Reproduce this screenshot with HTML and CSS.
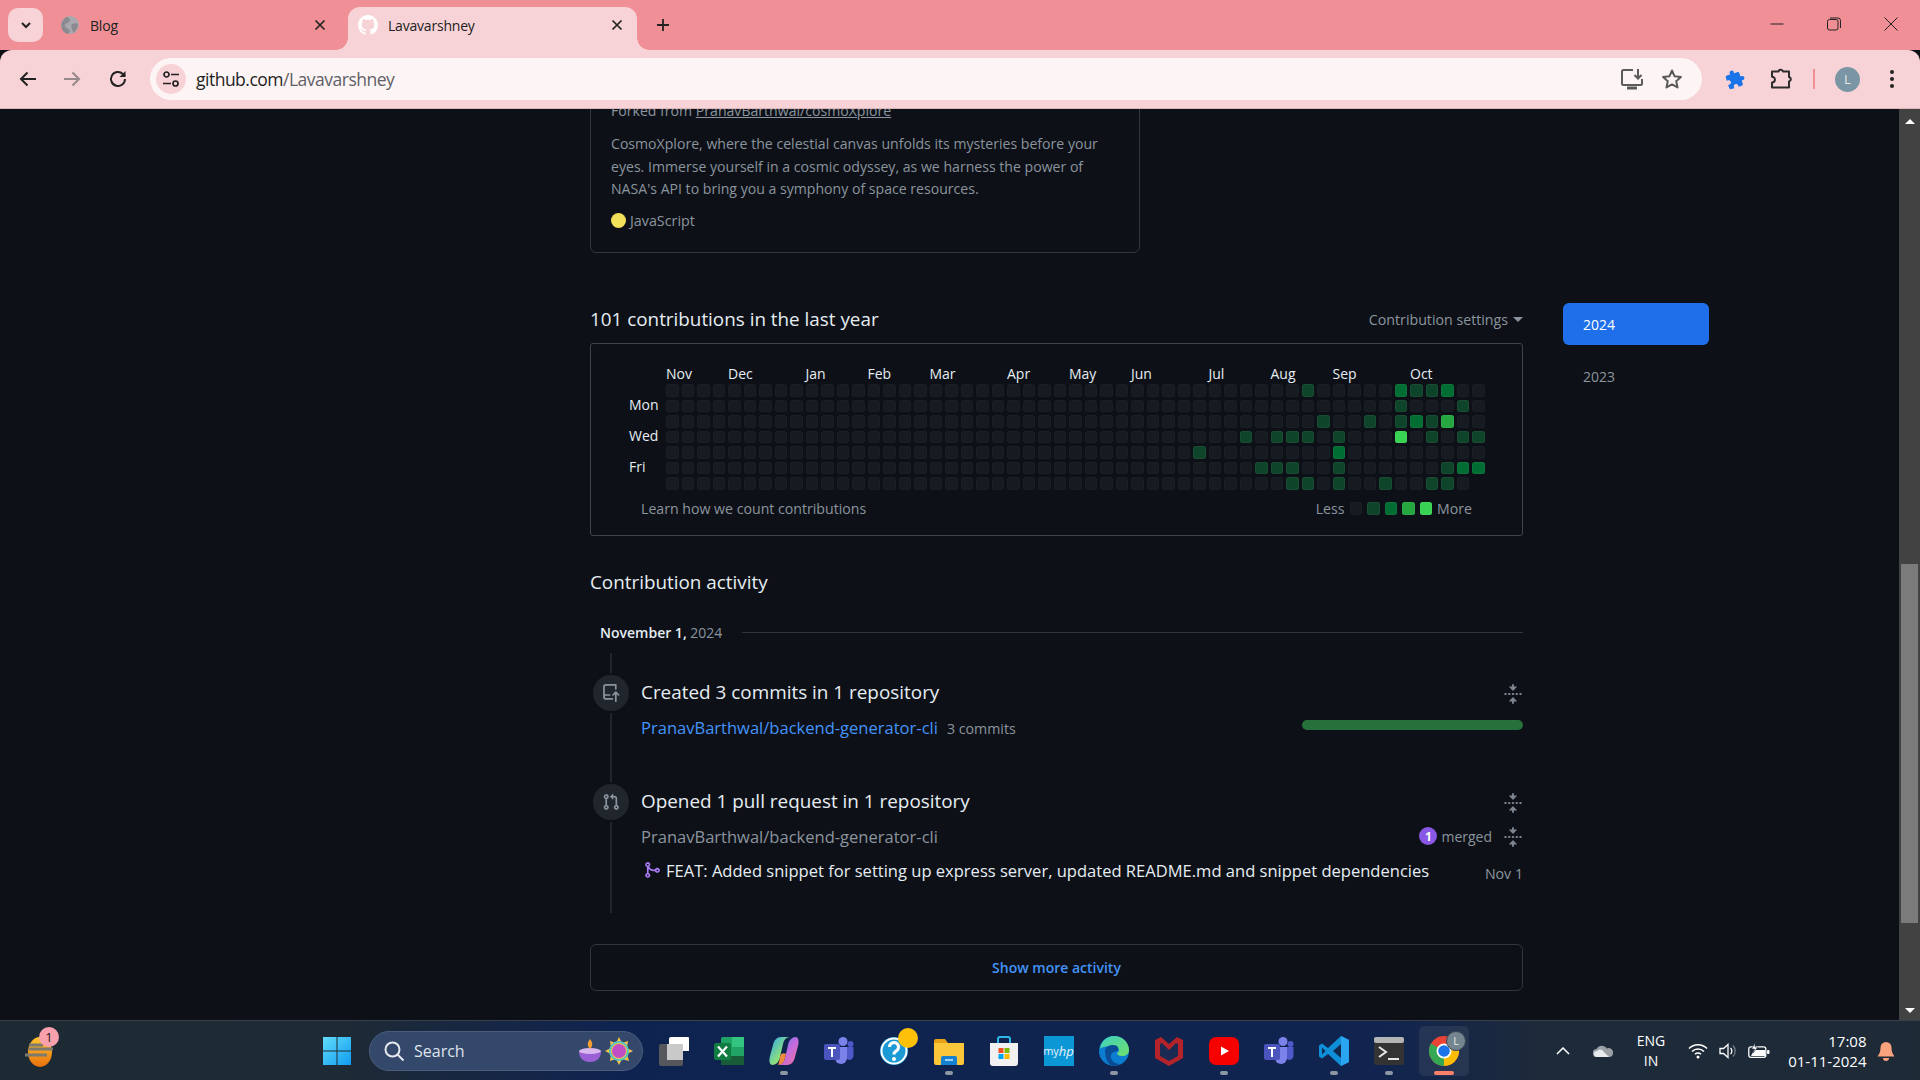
FILE: index.html
```html
<!DOCTYPE html>
<html lang="en">
<head>
<meta charset="utf-8">
<title>Lavavarshney</title>
<link rel="stylesheet" href="styles.css">
</head>
<body>
<header class="tabstrip">
  <div class="tablist"><svg width="14" height="14" viewBox="0 0 14 14"><path d="M3 5l4 4 4-4" fill="none" stroke="#222" stroke-width="2"/></svg></div>
  <div class="tab tab-blog">
    <svg class="favicon" viewBox="0 0 20 20"><circle cx="10" cy="10" r="9" fill="#a9a9ad"/><path d="M6 2c4 1 5 3 3 5S4 8 5 11s4 2 5 5l-2 3C3 18 0 13 2 7z M12 9c2-1 5-1 6 0 0 4-2 7-5 9 0-4-3-6-1-9z" fill="#8a8a90"/></svg>
    <span class="tab-title">Blog</span>
    <svg class="tab-x" viewBox="0 0 12 12"><path d="M1.5 1.5l9 9M10.5 1.5l-9 9" stroke="#222" stroke-width="1.7"/></svg>
  </div>
  <div class="tab tab-active">
    <svg class="favicon" viewBox="0 0 16 16"><path fill="#fff" d="M8 0c4.42 0 8 3.58 8 8a8.013 8.013 0 0 1-5.45 7.59c-.4.08-.55-.17-.55-.38 0-.27.01-1.13.01-2.2 0-.75-.25-1.23-.54-1.48 1.78-.2 3.65-.88 3.65-3.95 0-.88-.31-1.59-.82-2.15.08-.2.36-1.02-.08-2.12 0 0-.67-.22-2.2.82-.64-.18-1.32-.27-2-.27-.68 0-1.36.09-2 .27-1.53-1.03-2.2-.82-2.2-.82-.44 1.1-.16 1.92-.08 2.12-.51.56-.82 1.28-.82 2.15 0 3.06 1.86 3.75 3.64 3.95-.23.2-.44.55-.51 1.07-.46.21-1.61.55-2.33-.66-.15-.24-.6-.83-1.23-.82-.67.01-.27.38.01.53.34.19.73.9.82 1.13.16.45.68 1.31 2.69.94 0 .67.01 1.3.01 1.49 0 .21-.15.45-.55.38A7.995 7.995 0 0 1 0 8c0-4.42 3.58-8 8-8Z"/></svg>
    <span class="tab-title">Lavavarshney</span>
    <svg class="tab-x" viewBox="0 0 12 12"><path d="M1.5 1.5l9 9M10.5 1.5l-9 9" stroke="#222" stroke-width="1.7"/></svg>
  </div>
  <svg class="newtab" viewBox="0 0 14 14"><path d="M7 1v12M1 7h12" stroke="#222" stroke-width="1.8"/></svg>
  <div class="winctl">
    <svg viewBox="0 0 14 14" class="win"><path d="M.5 7h13" stroke="#222" stroke-width="1"/></svg>
    <svg viewBox="0 0 14 14" class="win"><rect x=".5" y="2.5" width="10.5" height="10.5" rx="2" fill="none" stroke="#222"/><path d="M3 1h8a2.5 2.5 0 0 1 2.5 2.5V11" fill="none" stroke="#222"/></svg>
    <svg viewBox="0 0 14 14" class="win"><path d="M.5.5l13 13M13.5.5l-13 13" stroke="#222"/></svg>
  </div>
</header>

<nav class="toolbar">
  <svg class="tool" viewBox="0 0 24 24"><path d="M20 12H5M11.5 5.5L5 12l6.5 6.5" fill="none" stroke="#222" stroke-width="2"/></svg>
  <svg class="tool tool-fwd" viewBox="0 0 24 24"><path d="M4 12h15M12.500 5.500L19 12l-6.500 6.500" fill="none" stroke="#95898b" stroke-width="2"/></svg>
  <svg class="tool tool-reload" viewBox="0 0 24 24"><path d="M19 12a7 7 0 1 1-2.200-5.100L19 9" fill="none" stroke="#222" stroke-width="2"/><path d="M19.500 4v6h-6z" fill="#222"/></svg>
  <div class="omnibox">
    <div class="siteinfo"><svg width="18" height="18" viewBox="0 0 18 18"><circle cx="4.500" cy="4.500" r="2.500" fill="none" stroke="#222" stroke-width="1.700"/><path d="M9 4.500h8M1 13.500h8" stroke="#222" stroke-width="1.700"/><circle cx="13.500" cy="13.500" r="2.500" fill="none" stroke="#222" stroke-width="1.700"/></svg></div>
    <span class="url">github.com<span class="url-path">/Lavavarshney</span></span>
    <svg class="tool tool-install" viewBox="0 0 24 24"><path d="M13 3H3.500A1.500 1.500 0 0 0 2 4.500v12A1.500 1.500 0 0 0 3.500 18h17a1.500 1.500 0 0 0 1.500-1.500V12" fill="none" stroke="#5a5a5a" stroke-width="2"/><path d="M7 21h10" stroke="#5a5a5a" stroke-width="3"/><path d="M18 2v9M14.500 8l3.500 3.500L21.500 8" fill="none" stroke="#5a5a5a" stroke-width="2"/></svg>
    <svg class="tool tool-star" viewBox="0 0 24 24"><path d="M12 3.500l2.600 5.800 6.300.7-4.700 4.200 1.300 6.200L12 17.300l-5.500 3.100 1.300-6.200L3.100 10l6.300-.7z" fill="none" stroke="#5a5a5a" stroke-width="2" stroke-linejoin="round"/></svg>
  </div>
  <svg class="tool tool-blue" viewBox="0 0 24 24"><g transform="rotate(-18 12 12) translate(2 2) scale(.84)"><path fill="#1a73e8" d="M20.500 11H19V7c0-1.100-.9-2-2-2h-4V3.500C13 2.120 11.880 1 10.500 1S8 2.120 8 3.500V5H4c-1.100 0-1.990.9-1.990 2v3.800H3.500c1.490 0 2.700 1.210 2.700 2.700s-1.210 2.700-2.700 2.700H2V20c0 1.100.9 2 2 2h3.800v-1.500c0-1.490 1.210-2.700 2.700-2.700 1.490 0 2.700 1.210 2.700 2.700V22H17c1.100 0 2-.9 2-2v-4h1.500c1.380 0 2.500-1.120 2.500-2.500S21.880 11 20.500 11z"/></g></svg>
  <svg class="tool tool-ext" viewBox="0 0 24 24"><path d="M3 4.500h6.500a2.300 2.300 0 0 1 4.500 0h6v5.500a2.300 2.300 0 0 1 0 4.500v6H3v-5a2.900 2.900 0 0 0 0-5.800z" fill="none" stroke="#2c2c2c" stroke-width="2" stroke-linejoin="round"/></svg>
  <div class="tool-sep"></div>
  <div class="avatar">L</div>
  <svg class="tool tool-menu" viewBox="0 0 24 24"><circle cx="12" cy="5" r="2" fill="#222"/><circle cx="12" cy="12" r="2" fill="#222"/><circle cx="12" cy="19" r="2" fill="#222"/></svg>
</nav>

<div class="viewport">
  <main class="main">
    <section class="pinned">
      <p class="forked">Forked from <a class="forked-link">PranavBarthwal/cosmoXplore</a></p>
      <p class="desc">CosmoXplore, where the celestial canvas unfolds its mysteries before your eyes. Immerse yourself in a cosmic odyssey, as we harness the power of NASA's API to bring you a symphony of space resources.</p>
      <p class="lang"><span class="lang-dot"></span>JavaScript</p>
    </section>

    <div class="contrib-head">
      <h2 class="h2">101 contributions in the last year</h2>
      <span class="settings">Contribution settings<span class="caret"></span></span>
    </div>

    <section class="calendar">
      <div class="months">
        <span>Nov</span><span>Dec</span><span>Jan</span><span>Feb</span><span>Mar</span><span>Apr</span><span>May</span><span>Jun</span><span>Jul</span><span>Aug</span><span>Sep</span><span>Oct</span>
      </div>
      <div class="graph-row">
        <div class="days"><span></span><span>Mon</span><span></span><span>Wed</span><span></span><span>Fri</span><span></span></div>
        <div class="graph" id="graph"></div>
      </div>
      <div class="cal-foot">
        <span class="learn">Learn how we count contributions</span>
        <div class="legend">
          <span class="legend-txt">Less</span>
          <i class="cell"></i><i class="cell l1"></i><i class="cell l2"></i><i class="cell l3"></i><i class="cell l4"></i>
          <span class="legend-txt">More</span>
        </div>
      </div>
    </section>

    <h2 class="h2 activity-title">Contribution activity</h2>
    <div class="date-row"><span class="date"><b>November 1,</b> 2024</span><span class="date-line"></span></div>

    <div class="timeline">
      <article class="item item-first">
        <div class="item-head">
          <span class="badge"><svg width="18" height="18" viewBox="0 0 16 16"><path fill="#8b949e" d="M1 2.500A2.500 2.500 0 0 1 3.500 0h8.750a.75.75 0 0 1 .75.75v3.500a.75.75 0 0 1-1.500 0V1.500h-8a1 1 0 0 0-1 1v6.708A2.492 2.492 0 0 1 3.500 9h3.250a.75.75 0 0 1 0 1.500H3.500a1 1 0 0 0 0 2h5.750a.75.75 0 0 1 0 1.500H3.500A2.500 2.500 0 0 1 1 11.500Zm13.230 7.790h-.001l-1.224-1.224v6.184a.75.75 0 0 1-1.500 0V9.066L10.280 10.290a.75.75 0 0 1-1.060-1.060l2.505-2.504a.75.75 0 0 1 1.060 0L15.290 9.230a.751.751 0 0 1-.018 1.042.751.751 0 0 1-1.042.018Z"/></svg></span>
          <span class="item-title">Created 3 commits in 1 repository</span>
          <svg class="fold" viewBox="0 0 16 16"><path fill="#7d8590" d="M10.896 2H8.750V.75a.75.75 0 0 0-1.500 0V2H5.104a.25.25 0 0 0-.177.427l2.896 2.896a.25.25 0 0 0 .354 0l2.896-2.896A.25.25 0 0 0 10.896 2ZM8.750 15.250a.75.75 0 0 1-1.500 0V14H5.104a.25.25 0 0 1-.177-.427l2.896-2.896a.25.25 0 0 1 .354 0l2.896 2.896a.25.25 0 0 1-.177.427H8.750v1.250Zm-6.500-6.500a.75.75 0 0 0 0-1.500h-.5a.75.75 0 0 0 0 1.500h.5ZM6 8a.75.75 0 0 1-.75.75h-.5a.75.75 0 0 1 0-1.500h.5A.75.75 0 0 1 6 8Zm2.250.75a.75.75 0 0 0 0-1.500h-.5a.75.75 0 0 0 0 1.500h.5ZM12 8a.75.75 0 0 1-.75.75h-.5a.75.75 0 0 1 0-1.500h.5A.75.75 0 0 1 12 8Zm2.250.75a.75.75 0 0 0 0-1.500h-.5a.75.75 0 0 0 0 1.500h.5Z"/></svg>
        </div>
        <div class="item-row item-row-commit">
          <a class="repo repo-link">PranavBarthwal/backend-generator-cli</a>
          <span class="commits">3 commits</span>
          <span class="bar"></span>
        </div>
      </article>
      <article class="item">
        <div class="item-head">
          <span class="badge"><svg width="18" height="18" viewBox="0 0 16 16"><path fill="#8b949e" d="M1.500 3.250a2.250 2.250 0 1 1 3 2.122v5.256a2.251 2.251 0 1 1-1.500 0V5.372A2.250 2.250 0 0 1 1.500 3.250Zm5.677-.177L9.573.677A.25.25 0 0 1 10 .854V2.500h1A2.500 2.500 0 0 1 13.500 5v5.628a2.251 2.251 0 1 1-1.500 0V5a1 1 0 0 0-1-1h-1v1.646a.25.25 0 0 1-.427.177L7.177 3.427a.25.25 0 0 1 0-.354ZM3.750 2.500a.75.75 0 1 0 0 1.500.75.75 0 0 0 0-1.500Zm0 9.500a.75.75 0 1 0 0 1.500.75.75 0 0 0 0-1.500Zm8.250.75a.75.75 0 1 0 1.500 0 .75.75 0 0 0-1.500 0Z"/></svg></span>
          <span class="item-title">Opened 1 pull request in 1 repository</span>
          <svg class="fold" viewBox="0 0 16 16"><path fill="#7d8590" d="M10.896 2H8.750V.75a.75.75 0 0 0-1.500 0V2H5.104a.25.25 0 0 0-.177.427l2.896 2.896a.25.25 0 0 0 .354 0l2.896-2.896A.25.25 0 0 0 10.896 2ZM8.750 15.250a.75.75 0 0 1-1.500 0V14H5.104a.25.25 0 0 1-.177-.427l2.896-2.896a.25.25 0 0 1 .354 0l2.896 2.896a.25.25 0 0 1-.177.427H8.750v1.250Zm-6.500-6.500a.75.75 0 0 0 0-1.500h-.5a.75.75 0 0 0 0 1.500h.5ZM6 8a.75.75 0 0 1-.75.75h-.5a.75.75 0 0 1 0-1.500h.5A.75.75 0 0 1 6 8Zm2.250.75a.75.75 0 0 0 0-1.500h-.5a.75.75 0 0 0 0 1.500h.5ZM12 8a.75.75 0 0 1-.75.75h-.5a.75.75 0 0 1 0-1.500h.5A.75.75 0 0 1 12 8Zm2.250.75a.75.75 0 0 0 0-1.500h-.5a.75.75 0 0 0 0 1.500h.5Z"/></svg>
        </div>
        <div class="item-row item-row-repo">
          <span class="repo repo-muted">PranavBarthwal/backend-generator-cli</span>
          <span class="merged-count">1</span>
          <span class="merged">merged</span>
          <svg class="fold" viewBox="0 0 16 16"><path fill="#7d8590" d="M10.896 2H8.750V.75a.75.75 0 0 0-1.500 0V2H5.104a.25.25 0 0 0-.177.427l2.896 2.896a.25.25 0 0 0 .354 0l2.896-2.896A.25.25 0 0 0 10.896 2ZM8.750 15.250a.75.75 0 0 1-1.500 0V14H5.104a.25.25 0 0 1-.177-.427l2.896-2.896a.25.25 0 0 1 .354 0l2.896 2.896a.25.25 0 0 1-.177.427H8.750v1.250Zm-6.500-6.500a.75.75 0 0 0 0-1.500h-.5a.75.75 0 0 0 0 1.500h.5ZM6 8a.75.75 0 0 1-.75.75h-.5a.75.75 0 0 1 0-1.500h.5A.75.75 0 0 1 6 8Zm2.250.75a.75.75 0 0 0 0-1.500h-.5a.75.75 0 0 0 0 1.500h.5ZM12 8a.75.75 0 0 1-.75.75h-.5a.75.75 0 0 1 0-1.500h.5A.75.75 0 0 1 12 8Zm2.250.75a.75.75 0 0 0 0-1.500h-.5a.75.75 0 0 0 0 1.500h.5Z"/></svg>
        </div>
        <div class="item-row item-row-pr">
          <svg class="merge" viewBox="0 0 16 16"><path fill="#ab7df8" d="M5.450 5.154A4.250 4.250 0 0 0 9.250 7.500h1.378a2.251 2.251 0 1 1 0 1.500H9.250A5.734 5.734 0 0 1 5 7.123v3.505a2.250 2.250 0 1 1-1.500 0V5.372a2.250 2.250 0 1 1 1.950-.218ZM4.250 13.500a.75.75 0 1 0 0-1.500.75.75 0 0 0 0 1.500Zm8.500-4.500a.75.75 0 1 0 0-1.500.75.75 0 0 0 0 1.500ZM5 3.250a.75.75 0 1 0 0 .005V3.250Z"/></svg>
          <span class="pr-title">FEAT: Added snippet for setting up express server, updated README.md and snippet dependencies</span>
          <span class="pr-date">Nov 1</span>
        </div>
      </article>
    </div>

    <div class="more">Show more activity</div>
  </main>

  <aside class="years">
    <div class="year year-on">2024</div>
    <div class="year">2023</div>
  </aside>

  <div class="scrollbar">
    <span class="arrow arrow-up"></span>
    <div class="track"><div class="thumb"></div></div>
    <span class="arrow arrow-down"></span>
  </div>
</div>

<footer class="taskbar">
  <div class="weather">
    <svg width="30" height="30" viewBox="0 0 30 30"><defs><linearGradient id="wg" x1="0" y1="0" x2="0" y2="1"><stop offset="0" stop-color="#ffc52e"/><stop offset="1" stop-color="#e8700e"/></linearGradient></defs><ellipse cx="15" cy="15" rx="12" ry="15" fill="url(#wg)"/><path d="M4 8h14M4 12h24M0 18h22" stroke="#7c7a70" stroke-width="3"/></svg>
    <span class="weather-badge">1</span>
  </div>
  <svg class="start" viewBox="0 0 30 30"><defs><linearGradient id="sg" x1="0" y1="0" x2="1" y2="1"><stop offset="0" stop-color="#62dcfb"/><stop offset="1" stop-color="#0f9cf0"/></linearGradient></defs><path fill="url(#sg)" d="M1 1h13.500v13.500H1zM15.500 1H29v13.500H15.500zM1 15.500h13.500V29H1zM15.500 15.500H29V29H15.500z"/></svg>
  <div class="searchbox">
    <svg width="22" height="22" viewBox="0 0 22 22"><circle cx="9.500" cy="9.500" r="7" fill="none" stroke="#e6e8ee" stroke-width="2"/><path d="M14.500 14.500l6 6" stroke="#e6e8ee" stroke-width="2"/></svg>
    <span class="search-txt">Search</span>
    <svg class="diya" width="56" height="30" viewBox="0 0 56 30"><path d="M1 15h22c0 7-4 11-11 11S1 22 1 15z" fill="#9b5fd6"/><ellipse cx="12" cy="15" rx="11" ry="3" fill="#d9b8f0"/><path d="M12 3c3 4 3 7 0 10-3-3-3-6 0-10z" fill="#f5a030"/><path d="M41 1l3 6 6-2-1 7 6 3-6 3 2 7-7-2-3 6-3-6-6 2 1-7-6-3 6-3-1-7 6 2z" fill="#f4c24c"/><circle cx="41" cy="15" r="7" fill="#c04fc6"/><circle cx="41" cy="15" r="9" fill="none" stroke="#4fc6c0" stroke-width="2"/></svg>
  </div>
  <div class="apps">
    <div class="app"><svg viewBox="0 0 30 30"><rect x="15" y="1" width="15" height="14" fill="#e8e8e8" rx="1"/><path d="M15 1h13a2 2 0 0 1 2 2v12H10V3a2 2 0 0 1 2-2z" fill="#fff"/><rect x="0" y="8" width="24" height="22" rx="2" fill="#5d5d5d" opacity=".9"/><rect x="8" y="8" width="16" height="16" fill="#c9c9c9"/></svg></div>
    <div class="app"><svg viewBox="0 0 30 30"><rect x="7" y="1" width="23" height="28" rx="2" fill="#21a366"/><rect x="18" y="1" width="12" height="10" fill="#33c481"/><rect x="18" y="11" width="12" height="9" fill="#21a366"/><rect x="7" y="20" width="23" height="9" fill="#185c37"/><rect y="7" width="17" height="17" rx="2" fill="#107c41"/><path d="M4 10.500l9 10M13 10.500l-9 10" stroke="#fff" stroke-width="2.200"/></svg></div>
    <div class="app app-dot"><svg viewBox="0 0 30 30"><defs><linearGradient id="cp1" x1="0" y1="0" x2="1" y2="1"><stop offset="0" stop-color="#2aa6f0"/><stop offset=".6" stop-color="#8ee07a"/><stop offset="1" stop-color="#f7d238"/></linearGradient><linearGradient id="cp2" x1="0" y1="0" x2="1" y2="1"><stop offset="0" stop-color="#4f7ff3"/><stop offset=".5" stop-color="#c06be0"/><stop offset="1" stop-color="#f6709a"/></linearGradient></defs><path d="M12 1h9c-4 0-6 3-7 7l-3 13c-1 5-4 8-8 8-3-1-3-5-2-9l3-11c1-5 4-8 8-8z" fill="url(#cp1)"/><path d="M18 29H9c4 0 6-3 7-7l3-13c1-5 4-8 8-8 3 1 3 5 2 9l-3 11c-1 5-4 8-8 8z" fill="url(#cp2)"/><path d="M9 29c4 0 6-3 7-7l1-4c-1-1-3-1-5 0l-1 3c-.5 3-1 6-2 8z" fill="#f08a3c"/></svg></div>
    <div class="app"><svg viewBox="0 0 30 30"><circle cx="19" cy="5.500" r="4.500" fill="#7b83eb"/><circle cx="26.500" cy="8" r="3" fill="#5059c9"/><path d="M13 11h10v11a6 6 0 0 1-12 0z" fill="#7b83eb"/><path d="M23 11h6.500v9a4 4 0 0 1-6.500 3z" fill="#5059c9"/><rect y="8" width="16" height="16" rx="2" fill="#4b53bc"/><path d="M4 12h8M8 12v9" stroke="#fff" stroke-width="2"/></svg></div>
    <div class="app app-help"><svg viewBox="0 0 30 30"><circle cx="15" cy="15" r="14" fill="#1b9ad6"/><circle cx="15" cy="15" r="12.500" fill="none" stroke="#fff" stroke-width="2"/><path d="M10.500 11a4.500 4.500 0 1 1 6.800 3.900c-1.500.9-2.300 1.800-2.300 3.600" fill="none" stroke="#fff" stroke-width="3"/><circle cx="15" cy="23" r="2" fill="#fff"/></svg><span class="help-dot"></span></div>
    <div class="app app-dot"><svg viewBox="0 0 30 30"><path d="M0 5a2 2 0 0 1 2-2h9l3 4H0z" fill="#e6a117"/><path d="M0 7h30v20a2 2 0 0 1-2 2H2a2 2 0 0 1-2-2z" fill="#fcc63a"/><path d="M9 20h12a2 2 0 0 1 2 2v7H7v-7a2 2 0 0 1 2-2z" fill="#1681d0"/><path d="M11 24h8" stroke="#9bd2f5" stroke-width="2"/></svg></div>
    <div class="app"><svg viewBox="0 0 30 30"><path d="M9 8V3a2 2 0 0 1 2-2h8a2 2 0 0 1 2 2v5" fill="none" stroke="#30b6e8" stroke-width="2"/><path d="M1 7h28v20a3 3 0 0 1-3 3H4a3 3 0 0 1-3-3z" fill="#f1f1f1"/><rect x="9.500" y="12" width="5" height="5" fill="#f25022"/><rect x="15.500" y="12" width="5" height="5" fill="#7fba00"/><rect x="9.500" y="18" width="5" height="5" fill="#00a4ef"/><rect x="15.500" y="18" width="5" height="5" fill="#ffb900"/></svg></div>
    <div class="app"><div class="myhp">my<i>hp</i></div></div>
    <div class="app app-dot"><svg viewBox="0 0 30 30"><defs><linearGradient id="eg" x1="0" y1="0" x2="1" y2="1"><stop offset="0" stop-color="#3fd0c2"/><stop offset="1" stop-color="#6fe06a"/></linearGradient></defs><circle cx="15" cy="15" r="15" fill="#0c7ed2"/><path d="M1 13C2 5 8 0 15 0c8 0 15 6 15 14 0 4-3 6-7 6-3 0-5-1-5-3 3-1 3-7-4-7-6 0-12 1-13 3z" fill="url(#eg)"/><path d="M6 15c0-4 4-6 8-6 5 0 6 3 5 6-4 0-8 2-7 7 1 3 4 6 9 6-2 1-4 2-6 2-6 0-9-8-9-15z" fill="#0a4d96"/></svg></div>
    <div class="app"><svg viewBox="0 0 30 30"><path d="M1 4l6-3 8 7 8-7 6 3v18L15 30 1 22z" fill="#b5232a"/><path d="M6 8l2-1 7 7 7-7 2 1v12l-9 5-9-5z" fill="#1b2a52"/></svg></div>
    <div class="app app-dot"><svg viewBox="0 0 30 30"><rect y="1" width="30" height="28" rx="7" fill="#f70000"/><path d="M12 10.500l8 4.500-8 4.500z" fill="#fff"/></svg></div>
    <div class="app"><svg viewBox="0 0 30 30"><circle cx="19" cy="5.500" r="4.500" fill="#7b83eb"/><circle cx="26.500" cy="8" r="3" fill="#5059c9"/><path d="M13 11h10v11a6 6 0 0 1-12 0z" fill="#7b83eb"/><path d="M23 11h6.500v9a4 4 0 0 1-6.500 3z" fill="#5059c9"/><rect y="8" width="16" height="16" rx="2" fill="#4b53bc"/><path d="M4 12h8M8 12v9" stroke="#fff" stroke-width="2"/></svg></div>
    <div class="app app-dot"><svg viewBox="0 0 30 30"><path d="M22 0l8 4v22l-8 4L9 18l-6 4.500L0 20.500V9.500L3 7.500 9 12z" fill="#0f8fd8"/><path d="M22 0l8 4v22l-8 4z" fill="#2aa5ef"/><path d="M22 8l-8 7 8 7z" fill="#12294f"/><path d="M3 11.500L6.500 15 3 18.500z" fill="#12294f"/></svg></div>
    <div class="app app-dot"><svg viewBox="0 0 30 30"><rect y="1" width="30" height="28" rx="2" fill="#333"/><rect y="1" width="30" height="6" rx="2" fill="#b4b4b4"/><path d="M5 11l7 5-7 5" fill="none" stroke="#e6e6e6" stroke-width="2"/><path d="M14 23h11" stroke="#e6e6e6" stroke-width="2"/></svg></div>
    <div class="app app-on"><svg viewBox="0 0 30 30"><circle cx="15" cy="15" r="15" fill="#ea4335"/><path d="M15 15L28 7.500A15 15 0 0 1 15 30z" fill="#fbbc04"/><path d="M15 15L15 30A15 15 0 0 1 2 7.500z" fill="#34a853"/><circle cx="15" cy="15" r="7.500" fill="#fff"/><circle cx="15" cy="15" r="5.800" fill="#1a73e8"/></svg><span class="chrome-avatar">L</span><span class="active-bar"></span></div>
  </div>
  <div class="tray">
    <svg class="tray-chev" viewBox="0 0 14 8"><path d="M1 7l6-6 6 6" fill="none" stroke="#fff" stroke-width="1.500"/></svg>
    <svg class="tray-cloud" viewBox="0 0 20 12"><path d="M4 12a4 4 0 0 1-.5-8A6 6 0 0 1 14 3.500 4.300 4.300 0 0 1 20 8a4 4 0 0 1-4 4z" fill="#9aa0a6"/><path d="M4 12a3 3 0 0 1 0-6c1-1 3-2 5-1l7 7z" fill="#e8eaed"/></svg>
    <div class="lang-ind"><span>ENG</span><span>IN</span></div>
    <svg class="tray-wifi" viewBox="0 0 20 16"><path d="M1 5.500a12.500 12.500 0 0 1 18 0M4 8.500a8.500 8.500 0 0 1 12 0M7 11.300a4.200 4.200 0 0 1 6 0" fill="none" stroke="#fff" stroke-width="1.500"/><circle cx="10" cy="14" r="1.500" fill="#fff"/></svg>
    <svg class="tray-vol" viewBox="0 0 20 16"><path d="M1 5.500h3.500L9 1.500v13l-4.500-4H1z" fill="none" stroke="#fff" stroke-width="1.300"/><path d="M11.500 5a4 4 0 0 1 0 6" fill="none" stroke="#fff" stroke-width="1.300"/><path d="M14 2.500a8 8 0 0 1 0 11" fill="none" stroke="#7a828c" stroke-width="1.200"/></svg>
    <svg class="tray-batt" viewBox="0 0 22 16"><rect x=".8" y="3.800" width="17" height="10.500" rx="2" fill="none" stroke="#fff" stroke-width="1.300"/><path d="M3 13l3-6h11v6z" fill="#fff"/><rect x="19" y="7" width="2.500" height="4" rx="1" fill="#fff"/><path d="M7 0L3.500 6h3L5 10l5-6H7z" fill="#fff" stroke="#1e2a38" stroke-width=".6"/></svg>
    <div class="clock"><span>17:08</span><span>01-11-2024</span></div>
    <svg class="tray-bell" viewBox="0 0 18 20"><path d="M9 1a5.500 5.500 0 0 1 5.500 5.500c0 4 1 6 3 9H.5c2-3 3-5 3-9A5.500 5.500 0 0 1 9 1z" fill="#f9a27e"/><path d="M6 17h6a3 3 0 0 1-6 0z" fill="#f9a27e"/></svg>
  </div>
</footer>
<script src="script.js"></script>
</body>
</html>
```
FILE: styles.css
```css
* { box-sizing: border-box; }
html, body { margin: 0; height: 100%; }
body {
  height: 100vh; display: flex; flex-direction: column; overflow: hidden;
  font-family: "Open Sans", "Noto Sans", sans-serif; background: #0d1117; color: #e6edf3;
}
p, h2 { margin: 0; font-weight: 400; }

/* browser chrome */
.tabstrip { height: 50px; flex: none; display: flex; align-items: flex-end; padding-left: 8px; background: #f09096; position: relative; z-index: 1; }
.tablist { width: 35px; height: 34px; margin-bottom: 8px; background: #f7d2d6; border-radius: 10px; display: flex; align-items: center; justify-content: center; }
.tab { height: 43px; display: flex; align-items: center; padding-bottom: 7px; color: #222; font-size: 14px; letter-spacing: -.2px; }
.tab-blog { width: 305px; padding-left: 17px; padding-right: 22px; }
.tab-active { width: 289px; padding-left: 10px; padding-right: 14px; background: #f7d2d6; border-radius: 12px 12px 0 0; position: relative; }
.tab-active::before, .tab-active::after { content: ""; position: absolute; bottom: 0; width: 12px; height: 12px; }
.tab-active::before { left: -12px; background: radial-gradient(circle at 0 0, #f09096 11.500px, #f7d2d6 12px); }
.tab-active::after { right: -12px; background: radial-gradient(circle at 100% 0, #f09096 11.500px, #f7d2d6 12px); }
.favicon { width: 20px; height: 20px; flex: none; }
.tab-title { flex: 1; margin-left: 10px; }
.tab-x { width: 12px; height: 12px; flex: none; }
.newtab { width: 14px; height: 14px; margin: 0 0 18px 19px; }
.winctl { margin-left: auto; display: flex; gap: 43px; padding: 0 22px 19px 0; align-self: flex-end; }
.win { width: 14px; height: 14px; display: block; }

.toolbar { height: 59px; flex: none; display: flex; align-items: center; padding-left: 16px; background: #f7d2d6; border-bottom: 1px solid #d9b6ba; border-radius: 12px 12px 0 0; }
.tool { width: 24px; height: 24px; flex: none; }
.tool-fwd { margin-left: 20px; }
.tool-reload { margin-left: 22px; }
.omnibox { width: 1552px; height: 42px; margin-left: 20px; padding: 0 18px 0 6px; display: flex; align-items: center; background: #fdf5f5; border-radius: 21px; flex: none; }
.siteinfo { width: 30px; height: 30px; border-radius: 50%; background: #f7d2d6; display: flex; align-items: center; justify-content: center; flex: none; }
.url { margin-left: 10px; font-size: 17.500px; letter-spacing: -.5px; color: #1f1f1f; flex: 1; }
.url-path { color: #5e6066; }
.tool-install { margin-right: 16px; }
.tool-blue { margin-left: 21px; }
.tool-ext { margin-left: 22px; }
.tool-sep { width: 2px; height: 20px; margin-left: 20px; background: #f09096; }
.avatar { width: 25px; height: 25px; margin-left: 20px; border-radius: 50%; background: #7a95a3; color: #e6e6e6; font-size: 13px; display: flex; align-items: center; justify-content: center; }
.tool-menu { margin-left: 20px; }

/* page */
.viewport { flex: 1; min-height: 0; display: flex; background: #0d1117; overflow: hidden; }
.main { width: 933px; margin-left: 590px; flex: none; }
.pinned { height: 182px; margin-top: -38px; padding: 28px 20px 0; border: 1px solid #30363d; border-radius: 6px; width: 550px; }
.forked { font-size: 14.100px; line-height: 22px; color: #8b949e; }
.forked-link { text-decoration: underline; }
.desc { margin-top: 11px; font-size: 14.100px; line-height: 22.600px; color: #8b949e; }
.lang { margin-top: 10px; font-size: 14.300px; line-height: 20px; color: #8b949e; display: flex; align-items: center; }
.lang-dot { width: 15px; height: 15px; border-radius: 50%; background: #f1e05a; margin-right: 4px; }

.contrib-head { margin-top: 51px; height: 30px; display: flex; align-items: center; justify-content: space-between; }
.h2 { font-size: 18.850px; line-height: 30px; color: #e6edf3; }
.settings { font-size: 14.200px; color: #8b949e; display: flex; align-items: center; }
.caret { width: 0; height: 0; margin-left: 5px; border: 5px solid transparent; border-top-color: #8b949e; border-bottom: 0; }

.calendar { margin-top: 9px; height: 193px; padding: 19px 0 0 38px; border: 1px solid #3d444d; border-radius: 3px; }
.months { display: grid; grid-template-columns: repeat(53, 15.500px); margin-left: 37px; height: 21px; font-size: 14px; line-height: 21px; color: #e6edf3; }
.months span { grid-row: 1; white-space: nowrap; }
.months span:nth-child(1) { grid-column: 1 / span 4; }
.months span:nth-child(2) { grid-column: 5 / span 4; }
.months span:nth-child(3) { grid-column: 10 / span 4; }
.months span:nth-child(4) { grid-column: 14 / span 4; }
.months span:nth-child(5) { grid-column: 18 / span 4; }
.months span:nth-child(6) { grid-column: 23 / span 4; }
.months span:nth-child(7) { grid-column: 27 / span 4; }
.months span:nth-child(8) { grid-column: 31 / span 4; }
.months span:nth-child(9) { grid-column: 36 / span 4; }
.months span:nth-child(10) { grid-column: 40 / span 4; }
.months span:nth-child(11) { grid-column: 44 / span 4; }
.months span:nth-child(12) { grid-column: 49 / span 4; }
.graph-row { display: flex; }
.days { width: 37px; margin-top: -3px; display: grid; grid-template-rows: repeat(7, 15.500px); font-size: 14px; line-height: 15.500px; color: #e6edf3; }
.graph { display: grid; grid-auto-flow: column; grid-template-rows: repeat(7, 12.500px); grid-auto-columns: 12.500px; gap: 3px; }
.cell { display: block; width: 12.500px; height: 12.500px; border-radius: 2.500px; background: #161b22; outline: 1px solid rgba(255,255,255,.02); outline-offset: -1px; }
.l1 { background: #0e4429; outline-color: rgba(255,255,255,.05); }
.l2 { background: #006d32; outline-color: rgba(255,255,255,.05); }
.l3 { background: #26a641; outline-color: rgba(255,255,255,.05); }
.l4 { background: #39d353; outline-color: rgba(255,255,255,.05); }
.cal-foot { display: flex; align-items: center; justify-content: space-between; margin-top: 8px; padding: 0 50px 0 12px; font-size: 14.150px; color: #8b949e; height: 22px; }
.legend { display: flex; align-items: center; gap: 5px; }
.legend .cell { width: 12.500px; height: 12.500px; }

.activity-title { margin-top: 31px; }
.date-row { margin: 25px 0 0 10px; height: 20px; display: flex; align-items: center; }
.date { font-size: 14px; color: #8b949e; }
.date b { color: #e6edf3; font-weight: 600; }
.date-line { flex: 1; height: 1px; margin-left: 20px; background: #30363d; }

.timeline { margin: 11px 0 0 20px; height: 260px; border-left: 2px solid #21262d; }
.item { padding-top: 22px; }
.item-first { height: 109px; }
.item-head { height: 36px; display: flex; align-items: center; }
.badge { width: 36px; height: 36px; margin-left: -19px; border-radius: 50%; background: #21262d; box-shadow: 0 0 0 2px #0d1117; display: flex; align-items: center; justify-content: center; flex: none; }
.item-title { margin-left: 12px; padding-bottom: 2px; font-size: 18.900px; color: #e6edf3; flex: 1; }
.fold { width: 20px; height: 20px; margin-top: 2px; flex: none; }
.item-row { margin-left: 29px; display: flex; align-items: center; height: 24px; }
.item-row-commit { margin-top: 4px; }
.item-row-repo { margin-top: 4px; }
.item-row-pr { margin-top: 10px; }
.repo { font-size: 16.550px; }
.repo-link { color: #4493f8; }
.repo-muted { color: #8b949e; flex: 1; }
.commits { margin-left: 9px; font-size: 14.200px; color: #8b949e; flex: 1; padding-top: 2px; }
.bar { width: 221px; height: 10px; margin-top: -4px; border-radius: 5px; background: #26703b; }
.merged-count { width: 18px; height: 18px; border-radius: 50%; background: #8957e5; color: #fff; font-size: 12px; font-weight: 700; display: flex; align-items: center; justify-content: center; }
.merged { margin: 0 11px 0 4px; font-size: 14px; color: #8b949e; }
.merge { width: 18px; height: 18px; margin-left: 2px; flex: none; }
.pr-title { margin-left: 5px; font-size: 16.550px; color: #e6edf3; flex: 1; white-space: nowrap; }
.pr-date { font-size: 14.200px; color: #8b949e; padding-top: 7px; }
.more { margin-top: 31px; height: 47px; border: 1px solid #30363d; border-radius: 6px; display: flex; align-items: center; justify-content: center; font-size: 14px; font-weight: 600; color: #4493f8; }

.years { width: 146px; margin: 194px 0 0 40px; flex: none; font-size: 14px; color: #8b949e; }
.year { height: 42px; padding-left: 20px; display: flex; align-items: center; border-radius: 6px; }
.year-on { background: #1f6feb; color: #fff; margin-bottom: 10px; }

.scrollbar { width: 21px; margin-left: auto; flex: none; background: #424242; display: flex; flex-direction: column; align-items: center; }
.arrow { width: 0; height: 0; flex: none; border: 5px solid transparent; }
.arrow-up { border-bottom: 5px solid #fff; border-top: 0; margin: 10px 0 2px; }
.arrow-down { border-top: 5px solid #fff; border-bottom: 0; margin: 5px 0 7px; }
.track { flex: 1; width: 100%; padding: 438px 2px 0; }
.thumb { height: 359px; background: #7b7b7b; }

/* taskbar */
.taskbar { height: 60px; flex: none; display: flex; align-items: center; background: linear-gradient(90deg, #1e2a33 0%, #1e2a35 18%, #0f2350 32%, #10244f 72%, #1d2a3a 80%, #1e2a36 100%); border-top: 1px solid #38404c; color: #fff; }
.weather { position: relative; width: 30px; height: 30px; margin-left: 25px; margin-top: 2px; flex: none; }
.weather-badge { position: absolute; top: -10px; left: 14px; width: 20px; height: 20px; border-radius: 50%; background: #f8a0ac; color: #1a1a1a; font-size: 13px; display: flex; align-items: center; justify-content: center; }
.start { width: 30px; height: 30px; margin-left: 267px; flex: none; }
.searchbox { width: 274px; height: 40px; margin-left: 17px; padding: 0 8px 0 13px; background: #33486b; border: 1px solid #4a5d7c; border-radius: 20px; display: flex; align-items: center; flex: none; }
.search-txt { margin-left: 9px; font-size: 16px; color: #dfe4ec; flex: 1; }
.apps { display: flex; margin-left: 3px; }
.app { width: 55px; height: 50px; display: flex; align-items: center; justify-content: center; position: relative; }
.app svg { width: 30px; height: 30px; display: block; }
.app-dot::after { content: ""; position: absolute; bottom: 1px; left: 24px; width: 8px; height: 4px; border-radius: 2px; background: #8d96a3; }
.help-dot { position: absolute; top: 2px; left: 32px; width: 20px; height: 20px; border-radius: 50%; background: #ffc107; }
.myhp { width: 30px; height: 30px; background: #0b96d6; color: #e8f4fb; font-size: 11px; display: flex; align-items: center; justify-content: center; }
.myhp i { font-size: 13px; }
.app-on { width: 50px; margin-left: 3px; background: rgba(255,255,255,.07); border-radius: 5px; }
.chrome-avatar { position: absolute; top: 5px; left: 27px; width: 20px; height: 20px; border-radius: 50%; background: #74858f; border: 1px solid #3a4654; color: #e6e6e6; font-size: 11px; display: flex; align-items: center; justify-content: center; }
.active-bar { position: absolute; bottom: 1px; left: 15px; width: 20px; height: 4px; border-radius: 2px; background: #f9816a; }
.tray { display: flex; align-items: center; flex: 1; }
.tray-chev { width: 14px; height: 8px; margin-left: 86.500px; }
.tray-cloud { width: 20px; height: 12px; margin-left: 23.500px; }
.lang-ind { width: 40px; margin-left: 18px; display: flex; flex-direction: column; align-items: center; font-size: 14px; line-height: 20px; }
.tray-wifi { width: 20px; height: 16px; margin-left: 17px; }
.tray-vol { width: 20px; height: 16px; margin-left: 10.500px; }
.tray-batt { width: 22px; height: 16px; margin-left: 9px; }
.clock { width: 90px; margin-left: 7px; display: flex; flex-direction: column; align-items: flex-end; font-size: 15px; line-height: 20px; }
.tray-bell { width: 18px; height: 20px; margin-left: 10px; }
```
FILE: script.js
```js
// Contribution levels by "row:column" for the non-empty days.
const levels = {
  "0:41":1,"0:47":2,"0:48":1,"0:49":1,"0:50":2,
  "1:47":1,"1:51":1,
  "2:42":1,"2:45":1,"2:47":1,"2:48":2,"2:49":1,"2:50":3,
  "3:37":1,"3:39":1,"3:40":1,"3:41":1,"3:43":1,"3:47":4,"3:49":1,"3:51":1,"3:52":1,
  "4:34":1,"4:43":2,
  "5:38":1,"5:39":1,"5:40":1,"5:43":1,"5:50":1,"5:51":2,"5:52":2,
  "6:40":1,"6:41":1,"6:43":1,"6:46":1,"6:49":1,"6:50":1
};
const graph = document.getElementById("graph");
for (let col = 0; col < 53; col++) {
  for (let row = 0; row < 7; row++) {
    if (col === 52 && row === 6) continue;
    const cell = document.createElement("i");
    const level = levels[row + ":" + col];
    cell.className = level ? "cell l" + level : "cell";
    graph.appendChild(cell);
  }
}
```
